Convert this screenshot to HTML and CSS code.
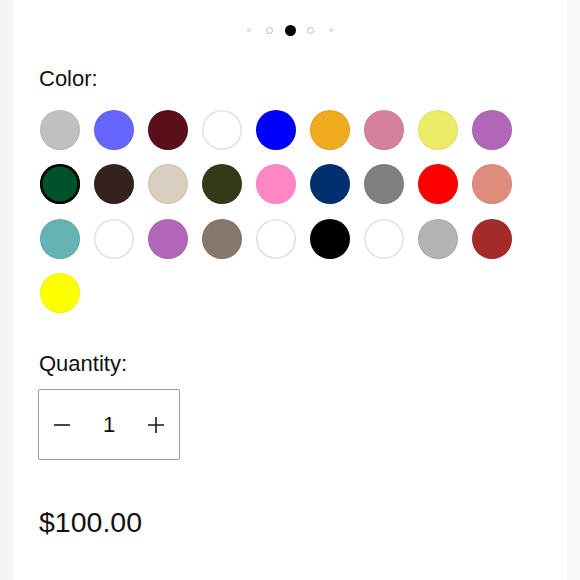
FILE: index.html
```html
<!DOCTYPE html>
<html lang="en">
<head>
<meta charset="utf-8">
<title>Product options</title>
<link rel="stylesheet" href="styles.css">
</head>
<body>
<main class="page">
  <div class="pager">
    <span class="slot"><span class="dot dot-sm"></span></span>
    <span class="slot"><span class="dot dot-md"></span></span>
    <span class="slot"><span class="dot dot-on"></span></span>
    <span class="slot"><span class="dot dot-md"></span></span>
    <span class="slot"><span class="dot dot-sm"></span></span>
  </div>

  <section class="options">
    <h2 class="label">Color:</h2>
    <div class="swatches">
      <button class="swatch" style="background:#c0c0c0"></button>
      <button class="swatch" style="background:#6666ff"></button>
      <button class="swatch" style="background:#5a0f1a"></button>
      <button class="swatch swatch-light" style="background:#ffffff"></button>
      <button class="swatch" style="background:#0000ff"></button>
      <button class="swatch" style="background:#f0aa1e"></button>
      <button class="swatch" style="background:#d6809f"></button>
      <button class="swatch" style="background:#ecec68"></button>
      <button class="swatch" style="background:#b266b8"></button>

      <button class="swatch swatch-selected" style="background:#00522a"></button>
      <button class="swatch" style="background:#35221e"></button>
      <button class="swatch" style="background:#d8cfc0"></button>
      <button class="swatch" style="background:#333a1a"></button>
      <button class="swatch" style="background:#ff88c4"></button>
      <button class="swatch" style="background:#003070"></button>
      <button class="swatch" style="background:#808080"></button>
      <button class="swatch" style="background:#ff0000"></button>
      <button class="swatch" style="background:#e08c7c"></button>

      <button class="swatch" style="background:#66b3b3"></button>
      <button class="swatch swatch-light" style="background:#ffffff"></button>
      <button class="swatch" style="background:#b266b8"></button>
      <button class="swatch" style="background:#87786b"></button>
      <button class="swatch swatch-light" style="background:#ffffff"></button>
      <button class="swatch" style="background:#000000"></button>
      <button class="swatch swatch-light" style="background:#ffffff"></button>
      <button class="swatch" style="background:#b3b3b3"></button>
      <button class="swatch" style="background:#a52a2a"></button>

      <button class="swatch" style="background:#ffff00"></button>
    </div>

    <h2 class="label label-qty">Quantity:</h2>
    <div class="qty">
      <button class="qty-btn" aria-label="Decrease">
        <svg width="18" height="18" viewBox="0 0 18 18"><path d="M1 9H17" stroke="#1a1a1a" stroke-width="1.6" fill="none"/></svg>
      </button>
      <span class="qty-num">1</span>
      <button class="qty-btn" aria-label="Increase">
        <svg width="18" height="18" viewBox="0 0 18 18"><path d="M1 9H17M9 1V17" stroke="#1a1a1a" stroke-width="1.6" fill="none"/></svg>
      </button>
    </div>

    <p class="price">$100.00</p>
  </section>
</main>
</body>
</html>
```

FILE: styles.css
```css
html, body {
  margin: 0;
  padding: 0;
  height: 100%;
}

body {
  background: linear-gradient(to right, #f3f4f6 0, #f3f4f6 13px, #ffffff 13px, #ffffff 567px, #fbfafa 567px);
  font-family: "Liberation Sans", Arial, sans-serif;
  color: #111111;
}

.page {
  margin: 0 13px;
  min-height: 100%;
  background: #ffffff;
}

.pager {
  height: 60px;
  display: flex;
  align-items: center;
  justify-content: center;
}

.slot {
  width: 20.7px;
  display: flex;
  justify-content: center;
  align-items: center;
}

.dot {
  display: block;
  border-radius: 50%;
  box-sizing: border-box;
}

.dot-sm {
  width: 4px;
  height: 4px;
  border: 1px solid #cfcfcf;
}

.dot-md {
  width: 7px;
  height: 7px;
  border: 1.5px solid #b8b8b8;
}

.dot-on {
  width: 11px;
  height: 11px;
  background: #000000;
}

.options {
  padding-left: 26px;
}

.label {
  margin: 0;
  padding-top: 6px;
  font-size: 22px;
  line-height: 26px;
  font-weight: 400;
}

.swatches {
  margin-top: 18px;
  display: grid;
  grid-template-columns: repeat(9, 40px);
  column-gap: 14px;
  row-gap: 14.4px;
  padding-left: 1px;
}

.swatch {
  width: 40px;
  height: 40px;
  padding: 0;
  border: none;
  border-radius: 50%;
  box-shadow: inset 0 0 0 1px rgba(0, 0, 0, 0.06);
}

.swatch-light {
  box-shadow: inset 0 0 0 1.5px #e2e2e2;
}

.swatch-selected {
  box-shadow: inset 0 0 0 2.5px #000000;
}

.label-qty {
  padding-top: 38px;
}

.qty {
  margin-top: 12px;
  width: 142px;
  height: 71px;
  box-sizing: border-box;
  border: 1px solid #9a9a9a;
  border-radius: 2px;
  display: grid;
  grid-template-columns: 46px 48px 46px;
  align-items: center;
  margin-left: -1px;
}

.qty-btn {
  height: 100%;
  padding: 0;
  border: none;
  background: transparent;
  display: flex;
  align-items: center;
  justify-content: center;
}

.qty-num {
  text-align: center;
  font-size: 22px;
  line-height: 26px;
}

.price {
  margin: 46px 0 0;
  font-size: 28.5px;
  line-height: 32px;
  font-weight: 400;
}
```
